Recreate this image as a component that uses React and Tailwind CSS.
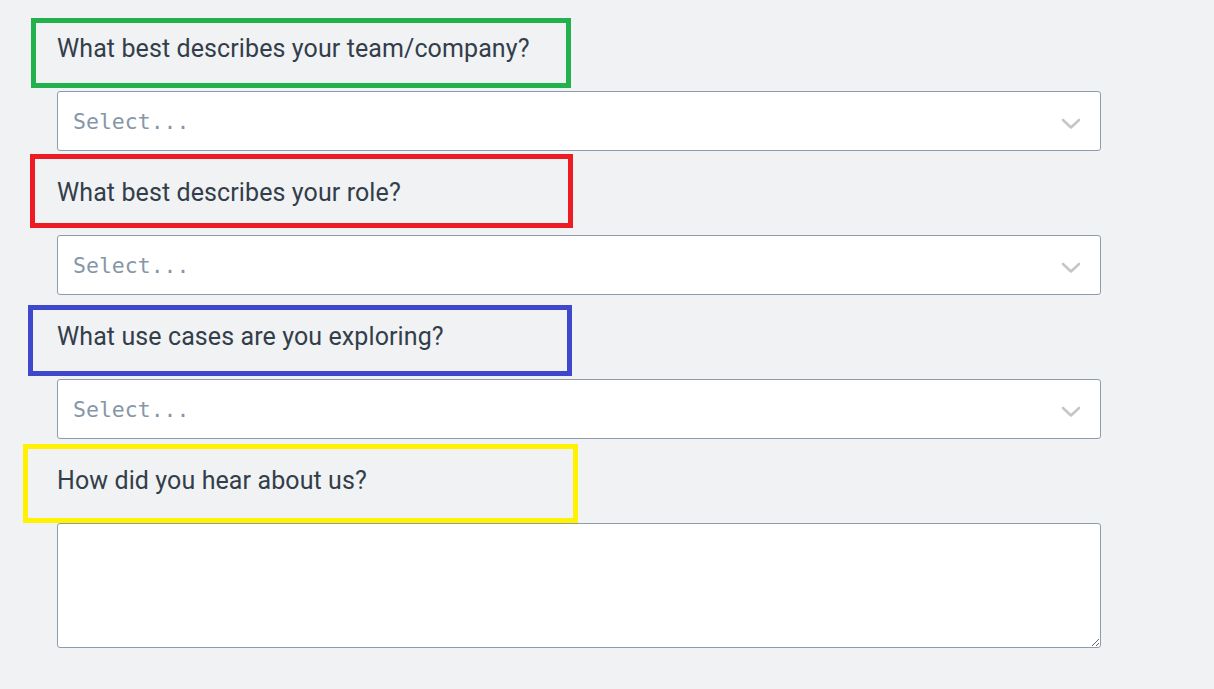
import React from "react";

const Chevron = () => (
  <svg width="20" height="12" viewBox="0 0 20 12" className="absolute right-[19px] top-[26px]" fill="none">
    <path d="M2 2 L10 9.5 L18 2" stroke="#c3c7cc" strokeWidth="2.6" strokeLinecap="round" strokeLinejoin="round" />
  </svg>
);

const Select = ({ className }) => (
  <div className={"relative ml-[57px] w-[1044px] h-[60px] bg-white border border-[#8c9cad] rounded-[3px] flex items-center pl-[15px] pt-[3px] " + className}>
    <span className="text-[#8597a8] text-[21.5px]" style={{ fontFamily: "'DejaVu Sans Mono', 'Liberation Mono', monospace" }}>Select...</span>
    <Chevron />
  </div>
);

export default function App() {
  return (
    <div className="w-full h-[689px] bg-[#f0f2f4] pt-[18px] overflow-hidden" style={{ fontFamily: "Roboto, 'Open Sans', sans-serif" }}>
      <div className="ml-[31px] w-[540px] h-[70px] border-[5px] border-[#22b14c] pl-[21px] pt-[12px] text-[25px] leading-[28px] tracking-[0.1px] text-[#333e4a]">
        What best describes your team/company?
      </div>
      <Select className="mt-[3px]" />
      <div className="mt-[3px] ml-[30px] w-[543px] h-[74px] border-[5px] border-[#ed1c24] pl-[22px] pt-[20px] text-[25px] leading-[28px] tracking-[0.1px] text-[#333e4a]">
        What best describes your role?
      </div>
      <Select className="mt-[7px]" />
      <div className="mt-[10px] ml-[28px] w-[544px] h-[71px] border-[5px] border-[#3f48cc] pl-[24px] pt-[13px] text-[25px] leading-[28px] tracking-[0.1px] text-[#333e4a]">
        What use cases are you exploring?
      </div>
      <Select className="mt-[3px]" />
      <div className="mt-[5px] ml-[23px] w-[555px] h-[79px] border-[5px] border-[#fff200] pl-[29px] pt-[18px] text-[25px] leading-[28px] tracking-[0.1px] text-[#333e4a]">
        How did you hear about us?
      </div>
      <textarea className="block ml-[57px] w-[1044px] h-[125px] bg-white border border-[#8c9cad] rounded-[3px] outline-none" />
    </div>
  );
}
